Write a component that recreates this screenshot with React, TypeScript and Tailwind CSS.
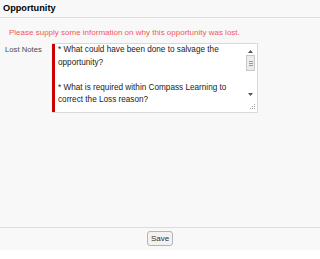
export default function App() {
  return (
    <div className="w-[320px] h-[259px] bg-white flex flex-col font-['Liberation_Sans',Arial,sans-serif] text-[#333]">
      {/* header */}
      <div className="h-[18px] bg-[#f8f8f8] border-b border-[#dcdcdc] px-[3px] pt-[3px]">
        <h1 className="text-[9.2px] font-bold leading-[11px] text-black">Opportunity</h1>
      </div>

      {/* body */}
      <div className="flex-1 bg-[#f8f8f8] pt-[9px]">
        <p className="pl-[9px] text-[8px] leading-[11px] text-[#f0585b]">
          Please supply some information on why this opportunity was lost.
        </p>
        <div className="flex mt-[5px]">
          <div className="w-[52px] pl-[5px] pt-[1px] text-[7.7px] leading-[11px] text-[#4a4a56]">Lost Notes</div>
          <div className="flex w-[206px] h-[70px] bg-white border border-[#d9d9d9] border-l-0">
            <div className="w-[3px] bg-[#c00] shrink-0" />
            <div className="flex-1 pl-[3px] pt-[0px] text-[8.2px] leading-[12.5px] text-[#222] overflow-hidden">
              <p>* What could have been done to salvage the opportunity?</p>
              <p className="mt-[12.5px]">* What is required within Compass Learning to correct the Loss reason?</p>
            </div>
            <div className="w-[11px] shrink-0 flex flex-col items-center pt-[4px] pb-[2px] mr-[1px]">
              <svg width="5" height="3" viewBox="0 0 5 3" className="mt-[2px]"><path d="M0 3 L2.5 0 L5 3 Z" fill="#555" /></svg>
              <div className="mt-[2px] w-[9px] h-[16px] bg-[#ececec] border border-[#c8c8c8] flex flex-col items-center justify-center gap-[1px]">
                <div className="w-[4px] h-px bg-[#999]" />
                <div className="w-[4px] h-px bg-[#999]" />
                <div className="w-[4px] h-px bg-[#999]" />
              </div>
              <div className="flex-1" />
              <svg width="5" height="3" viewBox="0 0 5 3" className="mb-[8px]"><path d="M0 0 L2.5 3 L5 0 Z" fill="#555" /></svg>
              <svg width="6" height="6" viewBox="0 0 6 6" className="self-end">
                <rect x="4" y="0" width="1" height="1" fill="#aaa" />
                <rect x="2" y="2" width="1" height="1" fill="#aaa" />
                <rect x="4" y="2" width="1" height="1" fill="#aaa" />
                <rect x="0" y="4" width="1" height="1" fill="#aaa" />
                <rect x="2" y="4" width="1" height="1" fill="#aaa" />
                <rect x="4" y="4" width="1" height="1" fill="#aaa" />
              </svg>
            </div>
          </div>
        </div>
      </div>

      {/* footer */}
      <div className="h-[23px] bg-[#f8f8f8] border-t border-[#dcdcdc] flex justify-center pt-[3px]">
        <button className="h-[15px] w-[26px] text-[8px] leading-[13px] text-[#333] bg-[#f2f2f2] border border-[#b5b5b5] rounded-[3px]">
          Save
        </button>
      </div>
      <div className="h-[9px] bg-white" />
    </div>
  );
}
